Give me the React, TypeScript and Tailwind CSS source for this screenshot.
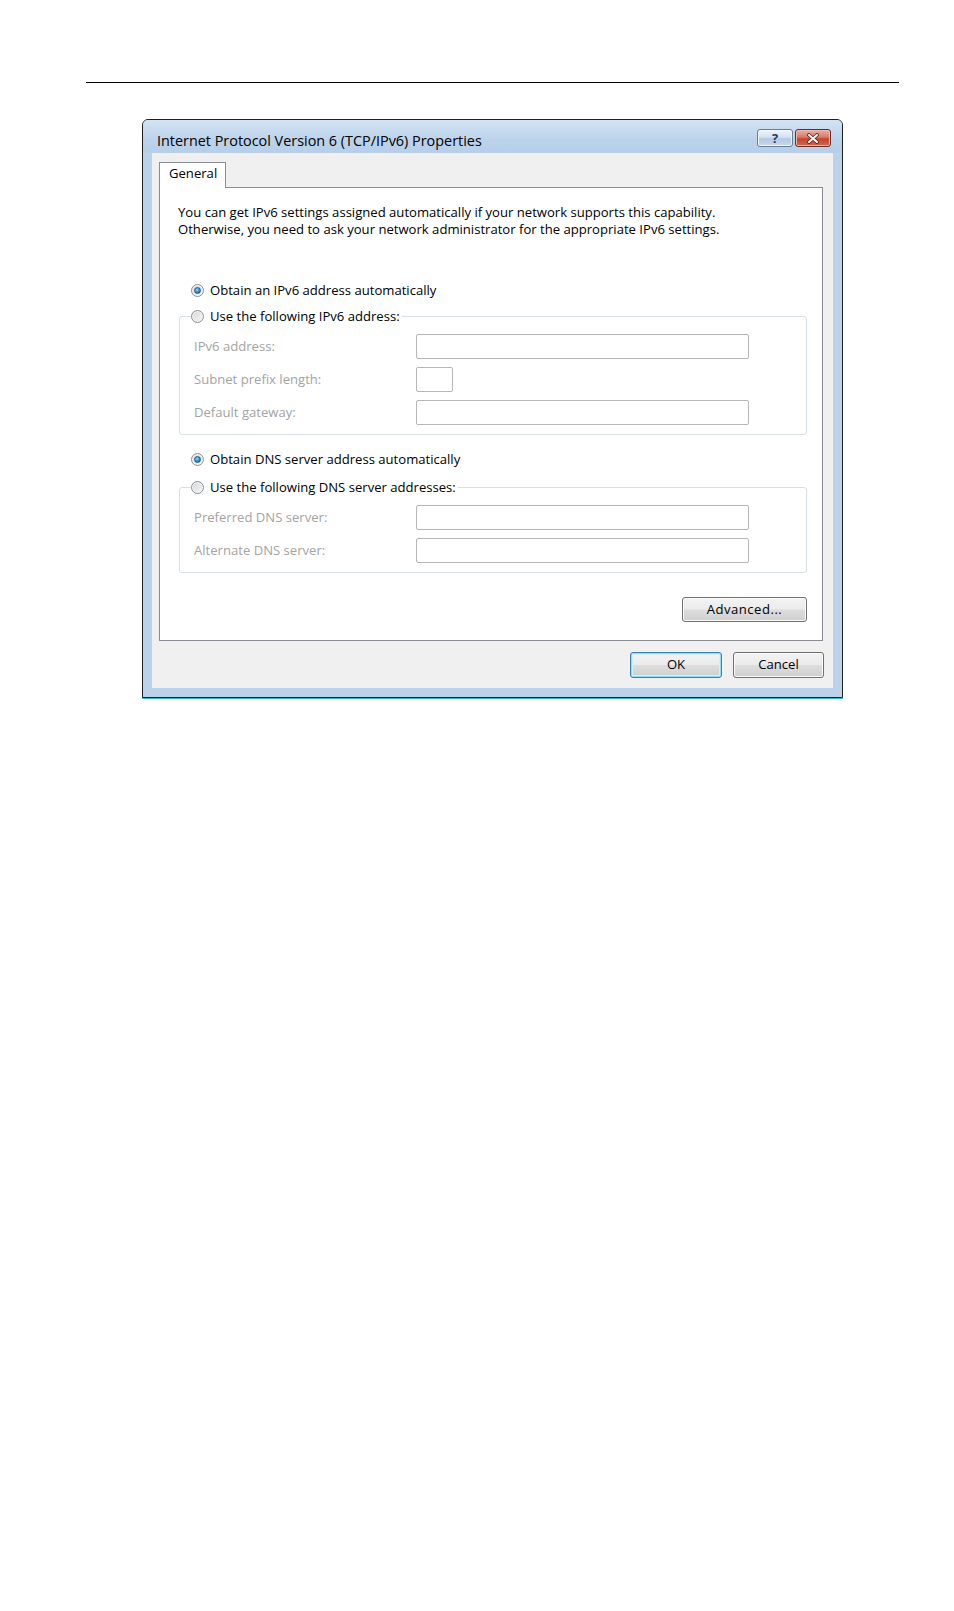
import React from 'react';

function Radio({ checked }: { checked?: boolean }) {
  return (
    <span className="flex h-[13px] w-[13px] shrink-0 items-center justify-center rounded-full border border-[#8c8f93] bg-[linear-gradient(135deg,#d6d7d9,#f7f7f8)] shadow-[inset_0_0_0_1px_#f4f4f4]">
      {checked && (
        <span className="h-[7px] w-[7px] rounded-full border border-[#1b5c8f] bg-[radial-gradient(circle_at_40%_35%,#9adcff,#2a8bd0_55%,#0f5a94)]" />
      )}
    </span>
  );
}

function RadioRow({ checked, label }: { checked?: boolean; label: string }) {
  return (
    <div className="flex h-[16px] items-center gap-[6px]">
      <Radio checked={checked} />
      <span className="leading-[16px]">{label}</span>
    </div>
  );
}

function Field({ label, short }: { label: string; short?: boolean }) {
  return (
    <div className="flex h-[25px] items-center">
      <span className="ml-[3px] w-[222px] text-[#a3a3a3]">{label}</span>
      <div
        className={`h-[25px] rounded-[2px] border border-[#b6b6b6] bg-white ${short ? 'w-[37px]' : 'w-[333px]'}`}
      />
    </div>
  );
}

function Button({ children, primary, className = '' }: { children: React.ReactNode; primary?: boolean; className?: string }) {
  return (
    <div
      className={`flex items-center justify-center rounded-[3px] border bg-[linear-gradient(to_bottom,#f3f3f3_0%,#ebebeb_48%,#dddddd_52%,#cfcfcf_100%)] ${
        primary
          ? 'border-[#3c7fb1] shadow-[inset_0_0_0_1px_#8fdcf7,inset_0_0_0_2px_#d4f0fb]'
          : 'border-[#707070] shadow-[inset_0_0_0_1px_#fbfbfb]'
      } ${className}`}
    >
      {children}
    </div>
  );
}

export default function App() {
  return (
    <div className="h-[1611px] w-[954px] bg-white font-['Open_Sans',sans-serif] text-[13.1px] text-black">
      {/* page rule */}
      <div className="pl-[86px] pt-[82px]">
        <div className="h-px w-[813px] bg-black" />
      </div>

      {/* dialog */}
      <div className="ml-[142px] mt-[36px] w-[701px]">
        <div className="rounded-t-[6px] border border-[#1d1f22] bg-[#bcd2ea]">
          {/* title bar */}
          <div className="flex h-[33px] items-start justify-between rounded-t-[5px] bg-[linear-gradient(to_bottom,#d3e3f3,#bcd3eb_60%,#b6cee8)] pl-[14px] pr-[11px]">
            <span className="mt-[12px] text-[14.4px] leading-[17px]">Internet Protocol Version 6 (TCP/IPv6) Properties</span>
            <div className="mt-[9px] flex gap-[2px]">
              <div className="flex h-[18px] w-[36px] items-center justify-center rounded-[3px] border border-[#6b7c91] bg-[linear-gradient(to_bottom,#eef5fc_0%,#d3e2f2_45%,#b3c9e2_55%,#c6d9ee_100%)] shadow-[inset_0_0_0_1px_#f2f7fd]">
                <span className="text-[13px] font-bold leading-[14px] text-[#2a3a50]">?</span>
              </div>
              <div className="flex h-[18px] w-[36px] items-center justify-center rounded-[3px] border border-[#6e2a22] bg-[linear-gradient(to_bottom,#eab1a4_0%,#d77a66_45%,#c4442f_55%,#d0664f_100%)] shadow-[inset_0_0_0_1px_#efb9ad]">
                <svg width="14" height="11" viewBox="0 0 14 11">
                  <path d="M3 2 L11 9 M11 2 L3 9" stroke="#5b1d14" strokeWidth="3.6" strokeLinecap="round" />
                  <path d="M3 2 L11 9 M11 2 L3 9" stroke="#ffffff" strokeWidth="2" strokeLinecap="round" />
                </svg>
              </div>
            </div>
          </div>

          {/* client area */}
          <div className="mx-[9px] h-[535px] bg-[#f0f0f0]">
            <div className="pl-[7px] pr-[10px] pt-[9px]">
              {/* tab */}
              <div className="relative z-10 -mb-px h-[26px] w-[67px] border border-b-0 border-[#898c95] bg-white pl-[9px] pt-[2px] leading-[17px]">
                General
              </div>
              {/* panel */}
              <div className="h-[454px] border border-[#898c95] bg-white pl-[18px] pt-[16px]">
                <p className="leading-[17px]">
                  You can get IPv6 settings assigned automatically if your network supports this capability.
                  <br />
                  Otherwise, you need to ask your network administrator for the appropriate IPv6 settings.
                </p>

                <div className="mt-[44px] pl-[13px]">
                  <RadioRow checked label="Obtain an IPv6 address automatically" />
                </div>

                <fieldset className="ml-px mt-[10px] w-[628px] rounded-[3px] border border-[#d5dfe5] pb-[9px] pl-[11px]">
                  <legend className="pr-[2px]">
                    <RadioRow label="Use the following IPv6 address:" />
                  </legend>
                  <div className="mt-[10px] flex flex-col gap-[8px]">
                    <Field label="IPv6 address:" />
                    <Field label="Subnet prefix length:" short />
                    <Field label="Default gateway:" />
                  </div>
                </fieldset>

                <div className="mt-[16px] pl-[13px]">
                  <RadioRow checked label="Obtain DNS server address automatically" />
                </div>

                <fieldset className="ml-px mt-[12px] w-[628px] rounded-[3px] border border-[#d5dfe5] pb-[9px] pl-[11px]">
                  <legend className="pr-[2px]">
                    <RadioRow label="Use the following DNS server addresses:" />
                  </legend>
                  <div className="mt-[10px] flex flex-col gap-[8px]">
                    <Field label="Preferred DNS server:" />
                    <Field label="Alternate DNS server:" />
                  </div>
                </fieldset>

                <div className="mt-[24px] flex w-[629px] justify-end">
                  <Button className="h-[25px] w-[125px] tracking-[0.5px]">Advanced...</Button>
                </div>
              </div>
            </div>

            <div className="mt-[11px] flex justify-end gap-[11px] pr-[9px]">
              <Button primary className="h-[26px] w-[92px]">OK</Button>
              <Button className="h-[26px] w-[91px]">Cancel</Button>
            </div>
          </div>
          <div className="h-[9px]" />
        </div>
        <div className="h-px bg-[#34b5c8]" />
      </div>
    </div>
  );
}
